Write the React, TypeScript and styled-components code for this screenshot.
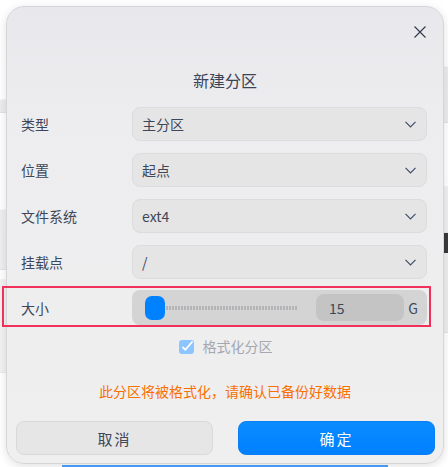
import React from "react";
import styled, { createGlobalStyle } from "styled-components";

const GlobalStyle = createGlobalStyle`
  html, body { margin: 0; padding: 0; background: #ffffff; }
  body { font-family: "Noto Sans CJK SC", "Noto Sans", sans-serif; }
  * { box-sizing: border-box; }
`;

const Page = styled.div`
  position: relative;
  width: 448px;
  height: 467px;
  overflow: hidden;
  background: #ffffff;
`;

const Backdrop = styled.div`
  display: flex;
  justify-content: space-between;
  width: 100%;
  height: 100%;
`;

const SideStrip = styled.div`
  display: flex;
  flex-direction: column;
  width: 8px;
`;

const Band = styled.div<{ $h: number; $c: string }>`
  height: ${(p) => p.$h}px;
  flex-shrink: 0;
  background: ${(p) => p.$c};
  border-bottom: 1px solid rgba(0,0,0,0.04);
`;

const BottomBar = styled.div`
  position: absolute;
  left: 62px;
  width: 326px;
  bottom: 0;
  height: 2px;
  background: #4aa3ff;
`;

const Dialog = styled.div`
  position: absolute;
  left: 6px;
  top: 6px;
  width: 438px;
  height: 458px;
  border-radius: 18px;
  border: 1px solid #d6d6da;
  background: linear-gradient(180deg, #e8e8ec 0%, #ededef 25%, #efefef 100%);
  box-shadow: 0 2px 10px rgba(0,0,0,0.12);
  display: flex;
  flex-direction: column;
  color: #3d4759;
`;

const TopBar = styled.div`
  display: flex;
  justify-content: flex-end;
  height: 50px;
  padding: 18px 17px 0 0;
`;

const CloseButton = styled.button`
  width: 13px;
  height: 13px;
  padding: 0;
  border: none;
  background: none;
  display: flex;
  align-items: center;
  justify-content: center;
  cursor: pointer;
`;

const Title = styled.div`
  text-align: center;
  font-size: 16px;
  line-height: 22px;
  height: 22px;
  margin-top: 12px;
  color: #3a4457;
`;

const Form = styled.div`
  display: flex;
  flex-direction: column;
  gap: 12px;
  margin-top: 16px;
  padding: 0 16px 0 14px;
`;

const Row = styled.div<{ $highlight?: boolean }>`
  position: relative;
  display: grid;
  grid-template-columns: 111px 1fr;
  align-items: center;
  height: 34px;
  ${(p) =>
    p.$highlight &&
    `
    height: 35px;
    margin-top: -1px;
    &::after {
      content: "";
      position: absolute;
      left: -19px;
      right: -4px;
      top: -4px;
      bottom: -2px;
      border: 2px solid #f2305a;
      pointer-events: none;
    }
  `}
`;

const Label = styled.div`
  font-size: 14px;
  color: #3d4759;
`;

const Select = styled.div`
  height: 100%;
  display: flex;
  align-items: center;
  justify-content: space-between;
  padding: 0 10px 0 9px;
  border-radius: 8px;
  background: #e5e5e6;
  border: 1px solid #dcdcde;
  font-size: 14px;
  color: #3d4759;
`;

const SliderPanel = styled.div`
  height: 100%;
  display: flex;
  align-items: center;
  padding: 0 9px 0 13px;
  border-radius: 8px;
  background: #d4d4d5;
`;

const Thumb = styled.div`
  width: 20px;
  height: 24px;
  border-radius: 7px;
  background: #0081ff;
  flex-shrink: 0;
`;

const Track = styled.div`
  width: 132px;
  height: 4px;
  margin-left: 1px;
  background: repeating-linear-gradient(90deg, #b4b4b6 0 2px, transparent 2px 3px);
`;

const ValueBox = styled.div`
  margin-left: auto;
  width: 88px;
  height: 27px;
  border-radius: 8px;
  background: #c4c4c5;
  display: flex;
  align-items: center;
  padding-left: 13px;
  font-size: 14px;
  color: #3d4759;
`;

const Unit = styled.div`
  width: 14px;
  text-align: right;
  font-size: 14px;
  color: #3d4759;
`;

const CheckRow = styled.div`
  display: flex;
  justify-content: center;
  align-items: center;
  gap: 9px;
  margin-top: 10px;
  height: 22px;
  padding-left: 1px;
  font-size: 14px;
  color: #a3a7b0;
`;

const CheckBox = styled.div`
  width: 15px;
  height: 14px;
  border-radius: 3px;
  background: #8cc5ff;
  position: relative;
  margin-top: 1px;
`;

const Warning = styled.div`
  text-align: center;
  font-size: 14px;
  line-height: 20px;
  margin-top: 24px;
  color: #fa7000;
`;

const Buttons = styled.div`
  display: flex;
  gap: 25px;
  margin-top: auto;
  padding: 0 8px 8px 9px;
`;

const Button = styled.button<{ $primary?: boolean }>`
  flex: 1;
  height: 34px;
  border-radius: 8px;
  font-family: "Noto Sans CJK SC", "Noto Sans", sans-serif;
  font-size: 15px;
  letter-spacing: 2px;
  cursor: pointer;
  border: 1px solid ${(p) => (p.$primary ? "#0a7ff5" : "#d9d9db")};
  background: ${(p) =>
    p.$primary ? "linear-gradient(180deg, #0a8cff 0%, #0080ff 100%)" : "#e6e6e7"};
  color: ${(p) => (p.$primary ? "#ffffff" : "#3d4759")};
`;

const Chevron = () => (
  <svg width="11" height="7" viewBox="0 0 11 7" fill="none">
    <path d="M0.5 0.8 L5.5 5.8 L10.5 0.8" stroke="#414d68" strokeWidth="1.2" />
  </svg>
);

const CloseIcon = () => (
  <svg width="12" height="12" viewBox="0 0 12 12">
    <path d="M0.5 0.5 L11.5 11.5 M11.5 0.5 L0.5 11.5" stroke="#2f3646" strokeWidth="1.1" />
  </svg>
);

const CheckMark = () => (
  <svg width="15" height="14" viewBox="0 0 15 14" style={{ position: "absolute", left: 0, top: 0 }}>
    <path d="M3.5 7 L6.3 9.8 L13.5 1.5" stroke="#ffffff" strokeWidth="1.8" fill="none" />
  </svg>
);

const selects = [
  { label: "类型", value: "主分区" },
  { label: "位置", value: "起点" },
  { label: "文件系统", value: "ext4" },
  { label: "挂载点", value: "/" },
];

export default function App() {
  return (
    <Page>
      <GlobalStyle />
      <Backdrop>
        <SideStrip>
          <Band $h={100} $c="#ffffff" />
          <Band $h={13} $c="#ececec" />
          <Band $h={97} $c="#ffffff" />
          <Band $h={60} $c="#eeeeee" />
          <Band $h={10} $c="#ffffff" />
          <Band $h={93} $c="#f2f2f2" />
        </SideStrip>
        <SideStrip>
          <Band $h={67} $c="#ffffff" />
          <Band $h={56} $c="#ececec" />
          <Band $h={64} $c="#ffffff" />
          <Band $h={46} $c="#f0f0f0" />
          <Band $h={20} $c="#3a3a3a" />
          <Band $h={80} $c="#eeeeee" />
        </SideStrip>
      </Backdrop>
      <BottomBar />
      <Dialog>
        <TopBar>
          <CloseButton aria-label="close">
            <CloseIcon />
          </CloseButton>
        </TopBar>
        <Title>新建分区</Title>
        <Form>
          {selects.map((s) => (
            <Row key={s.label}>
              <Label>{s.label}</Label>
              <Select>
                <span>{s.value}</span>
                <Chevron />
              </Select>
            </Row>
          ))}
          <Row $highlight>
            <Label>大小</Label>
            <SliderPanel>
              <Thumb />
              <Track />
              <ValueBox>15</ValueBox>
              <Unit>G</Unit>
            </SliderPanel>
          </Row>
        </Form>
        <CheckRow>
          <CheckBox>
            <CheckMark />
          </CheckBox>
          <span>格式化分区</span>
        </CheckRow>
        <Warning>此分区将被格式化，请确认已备份好数据</Warning>
        <Buttons>
          <Button>取消</Button>
          <Button $primary>确定</Button>
        </Buttons>
      </Dialog>
    </Page>
  );
}
